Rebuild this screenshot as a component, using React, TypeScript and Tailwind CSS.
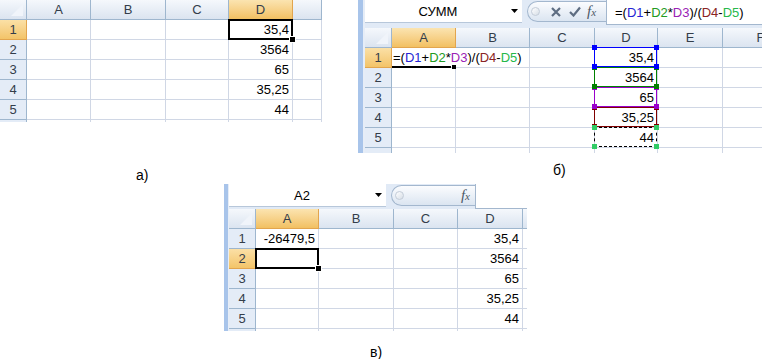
import React from "react"

type Col = { label: string; w: string; sel?: boolean }

const HDR = "bg-linear-to-b from-[#f5f8fc] to-[#dbe4f0] border-r border-b border-[#9eb6ce]"
const HSEL = "bg-linear-to-b from-[#fbe4b0] to-[#f2c061] border-r border-b border-[#e2a54e]"
const RHDR = "bg-[#e4ecf7] border-r border-b border-[#9eb6ce]"
const RSEL = "bg-linear-to-b from-[#fbe0a6] to-[#f3c468] border-r border-b border-[#e2a54e]"
const CELL = "border-r border-b border-[#d0d7e5] bg-white"

function Corner() {
  return (
    <div className={`w-[27px] shrink-0 relative ${HDR}`}>
      <svg className="absolute right-[3px] bottom-[3px]" width="12" height="12" viewBox="0 0 12 12">
        <polygon points="12,0 12,12 0,12" fill="#f0f4fa" />
      </svg>
    </div>
  )
}

function Sheet({
  cols,
  selRow,
  cell,
  tail,
}: {
  cols: Col[]
  selRow: number
  cell: (r: number, c: number) => React.ReactNode
  tail: string
}) {
  return (
    <div className="flex flex-col text-[#333d4a]">
      <div className="flex h-[20px]">
        <Corner />
        {cols.map((c, i) => (
          <div key={i} className={`${c.w} shrink-0 flex items-center justify-center pt-px ${c.sel ? HSEL : HDR}`}>
            {c.label}
          </div>
        ))}
      </div>
      {[1, 2, 3, 4, 5].map((r) => (
        <div key={r} className="flex h-[20px]">
          <div className={`w-[27px] shrink-0 flex items-center justify-center pt-px ${r === selRow ? RSEL : RHDR}`}>{r}</div>
          {cols.map((c, i) => (
            <div key={i} className={`${c.w} shrink-0 relative text-black ${CELL}`}>
              {cell(r, i)}
            </div>
          ))}
        </div>
      ))}
      <div className={`flex ${tail}`}>
        <div className="w-[27px] shrink-0 bg-[#e4ecf7] border-r border-[#9eb6ce]" />
        {cols.map((c, i) => (
          <div key={i} className={`${c.w} shrink-0 border-r border-[#d0d7e5]`} />
        ))}
      </div>
    </div>
  )
}

const Num = ({ v }: { v: string }) => (
  <div className="h-full flex items-center justify-end pr-[3px] pt-px">{v}</div>
)

const Active = () => (
  <div className="absolute inset-[-1px] border-2 border-black z-20">
    <div className="absolute right-[-5px] bottom-[-5px] w-[7px] h-[7px] bg-black border border-white" />
  </div>
)

const dValues = ["35,4", "3564", "65", "35,25", "44"]

function Range({ line, dot, z, dashed }: { line: string; dot: string; z: string; dashed?: boolean }) {
  return (
    <div className={`absolute left-[-1px] top-[-1px] right-0 bottom-0 border ${dashed ? "border-dashed" : "border-solid"} ${line} ${z}`}>
      <div className={`absolute left-[-3px] top-[-3px] w-[5px] h-[5px] ${dot}`} />
      <div className={`absolute right-[-3px] top-[-3px] w-[5px] h-[5px] ${dot}`} />
      <div className={`absolute left-[-3px] bottom-[-3px] w-[5px] h-[5px] ${dot}`} />
      <div className={`absolute right-[-3px] bottom-[-3px] w-[5px] h-[5px] ${dot}`} />
    </div>
  )
}

const ranges = [
  { line: "border-[#0000ff]", dot: "bg-[#0000ff]", z: "z-50" },
  { line: "border-[#008000]", dot: "bg-[#008000]", z: "z-40" },
  { line: "border-[#9900cc]", dot: "bg-[#9900cc]", z: "z-30" },
  { line: "border-[#800000]", dot: "bg-[#800000]", z: "z-20" },
  { line: "border-black", dot: "bg-[#33cc66]", z: "z-[25]", dashed: true },
]

function Formula() {
  return (
    <>
      =(<span className="text-[#2424d4]">D1</span>+<span className="text-[#229a22]">D2</span>*
      <span className="text-[#9a22b4]">D3</span>)/(<span className="text-[#8a2424]">D4</span>-
      <span className="text-[#26b84a]">D5</span>)
    </>
  )
}

function Fx() {
  return (
    <span className="italic font-['Liberation_Serif',serif] text-[15px] leading-none text-[#4c5866]">
      f<span className="text-[11px]">x</span>
    </span>
  )
}

function FxBar({
  name,
  pill,
  editing,
  h,
  children,
}: {
  name: string
  pill: string
  editing?: boolean
  h: string
  children?: React.ReactNode
}) {
  return (
    <div className={`flex ${h} bg-[#e1eaf6]`}>
      <div className="w-[157px] h-[23px] shrink-0 flex items-center bg-white border-b border-[#b7c7da]">
        <div className="flex-1 text-center text-[13px] pt-px">{name}</div>
        <svg className="mr-[4px]" width="7" height="4" viewBox="0 0 7 4">
          <polygon points="0,0 7,0 3.5,4" fill="#000" />
        </svg>
      </div>
      <div
        className={`${pill} h-[21px] mt-[1px] ml-[5px] shrink-0 flex items-center rounded-l-full border border-r-0 border-[#a3b7ce] bg-linear-to-b from-[#fbfcfe] to-[#dbe5f1]`}
      >
        <div className="w-[9px] h-[9px] ml-[3px] rounded-full border border-[#c3ccd8] bg-linear-to-br from-white to-[#d6dde6]" />
        {editing && (
          <>
            <svg className="ml-[11px]" width="10" height="10" viewBox="0 0 10 10">
              <path d="M1 1 L9 9 M9 1 L1 9" stroke="#5e6d82" strokeWidth="2.2" />
            </svg>
            <svg className="ml-[8px]" width="12" height="11" viewBox="0 0 12 11">
              <path d="M1 6 L4.5 9.5 L11 1.5" stroke="#5e6d82" strokeWidth="2.2" fill="none" />
            </svg>
          </>
        )}
        <div className={editing ? "ml-[6px]" : "ml-auto mr-[5px]"}>
          <Fx />
        </div>
      </div>
      <div className="flex-1 h-[25px] flex items-center pl-[8px] pt-px bg-white border-l border-b border-[#a3b7ce] whitespace-nowrap overflow-hidden">
        {children}
      </div>
    </div>
  )
}

function SheetA() {
  const cols: Col[] = [
    { label: "A", w: "w-[64px]" },
    { label: "B", w: "w-[75px]" },
    { label: "C", w: "w-[63px]" },
    { label: "D", w: "w-[64px]", sel: true },
    { label: "", w: "w-[29px]" },
  ]
  return (
    <div className="w-[322px] overflow-hidden">
      <Sheet
        cols={cols}
        selRow={1}
        tail="h-[2px]"
        cell={(r, c) =>
          c === 3 ? (
            <>
              <Num v={dValues[r - 1]} />
              {r === 1 && <Active />}
            </>
          ) : null
        }
      />
    </div>
  )
}

function SheetB() {
  const cols: Col[] = [
    { label: "A", w: "w-[64px]", sel: true },
    { label: "B", w: "w-[74px]" },
    { label: "C", w: "w-[65px]" },
    { label: "D", w: "w-[63px]" },
    { label: "E", w: "w-[65px]" },
    { label: "F", w: "w-[76px]" },
  ]
  return (
    <div className="flex">
      <div className="w-[7px] shrink-0 bg-[#a8c4ea] border-r-2 border-[#e6edf7]" />
      <div className="w-[397px] flex flex-col overflow-hidden">
        <FxBar name="СУММ" pill="w-[79px]" editing h="h-[28px]">
          <Formula />
        </FxBar>
        <Sheet
          cols={cols}
          selRow={1}
          tail="h-[5px]"
          cell={(r, c) => {
            if (c === 0 && r === 1)
              return (
                <>
                  <div className="absolute left-0 top-0 h-[19px] bg-white z-10 whitespace-nowrap flex items-center pl-[1px] pt-px">
                    <Formula />
                  </div>
                  <div className="absolute left-0 right-[4px] bottom-[-1px] h-[2px] bg-black z-20" />
                  <div className="absolute right-[-1px] bottom-[-2px] w-[4px] h-[4px] bg-black z-20" />
                </>
              )
            if (c === 3) {
              const g = ranges[r - 1]
              return (
                <>
                  <Num v={dValues[r - 1]} />
                  <Range line={g.line} dot={g.dot} z={g.z} dashed={g.dashed} />
                </>
              )
            }
            return null
          }}
        />
      </div>
    </div>
  )
}

function SheetC() {
  const cols: Col[] = [
    { label: "A", w: "w-[63px]", sel: true },
    { label: "B", w: "w-[75px]" },
    { label: "C", w: "w-[64px]" },
    { label: "D", w: "w-[65px]" },
    { label: "", w: "w-[20px]" },
  ]
  return (
    <div className="flex">
      <div className="w-[5px] shrink-0 bg-[#a8c4ea] border-r border-[#e6edf7]" />
      <div className="w-[298px] flex flex-col overflow-hidden">
        <FxBar name="A2" pill="w-[84px]" h="h-[25px]" />
        <Sheet
          cols={cols}
          selRow={2}
          tail="h-[2px]"
          cell={(r, c) => {
            if (c === 0 && r === 1) return <Num v="-26479,5" />
            if (c === 0 && r === 2) return <Active />
            if (c === 3) return <Num v={dValues[r - 1]} />
            return null
          }}
        />
      </div>
    </div>
  )
}

export default function App() {
  return (
    <div className="w-[762px] h-[359px] bg-white overflow-hidden font-['Liberation_Sans',Arial,sans-serif] text-[13px] text-black">
      <div className="flex h-[184px]">
        <div className="w-[358px] shrink-0 flex flex-col">
          <SheetA />
          <div className="mt-[45px] pl-[136px] text-[14px] leading-[16px]">а)</div>
        </div>
        <div className="w-[404px] shrink-0 flex flex-col">
          <SheetB />
          <div className="mt-[9px] pl-[195px] text-[14px] leading-[16px]">б)</div>
        </div>
      </div>
      <div className="pl-[224px] flex flex-col">
        <SheetC />
        <div className="mt-[13px] pl-[146px] text-[14px] leading-[16px]">в)</div>
      </div>
    </div>
  )
}
